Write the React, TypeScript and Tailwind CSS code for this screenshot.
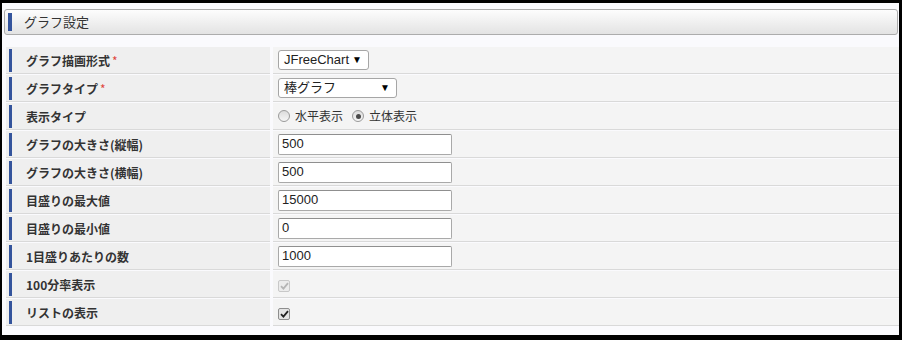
import React from 'react';

const jp = { fontFamily: '"Noto Sans CJK JP", "Noto Sans", sans-serif' };
const latin = { fontFamily: '"Liberation Sans", "Noto Sans CJK JP", sans-serif' };

const Required: React.FC = () => <span className="ml-[2px] text-[#e0463c] font-normal">*</span>;

const Row: React.FC<{ label: React.ReactNode; children: React.ReactNode }> = ({ label, children }) => (
  <div className="flex h-[27px] mb-px">
    <div className="w-[264px] shrink-0 bg-[#efefef] border-b border-[#d9d9d9] pl-[3px] pt-[2px] pb-px flex">
      <div
        className="border-l-[3px] border-[#34549c] pl-[14px] flex items-center text-[12px] font-bold text-[#333]"
        style={jp}
      >
        {label}
      </div>
    </div>
    <div className="ml-[3px] flex-1 bg-[#f4f4f4] border-b border-[#d9d9d9] pl-[5px] flex items-center">
      {children}
    </div>
  </div>
);

const Select: React.FC<{ value: string; width: string }> = ({ value, width }) => (
  <div
    className={`${width} h-[20px] bg-white border border-[#a6a6a6] rounded-[3px] flex items-center justify-between pl-[5px] pr-[6px] text-[13px] text-[#222]`}
    style={latin}
  >
    <span>{value}</span>
    <span className="text-[10px] leading-none text-black">▼</span>
  </div>
);

const TextInput: React.FC<{ value: string }> = ({ value }) => (
  <div
    className="w-[174px] h-[21px] bg-white border border-[#a9a9a9] border-t-[#8f8f8f] rounded-[2px] flex items-center pl-[3px] text-[13px] text-[#222]"
    style={latin}
  >
    {value}
  </div>
);

const Radio: React.FC<{ checked?: boolean; label: string }> = ({ checked, label }) => (
  <div className="flex items-center mr-[9px]">
    <span className="w-[12px] h-[12px] rounded-full border border-[#9a9a9a] bg-gradient-to-b from-[#dcdcdc] to-[#f6f6f6] flex items-center justify-center">
      {checked && <span className="w-[5px] h-[5px] rounded-full bg-[#4a4a4a]" />}
    </span>
    <span className="ml-[5px] text-[12px] text-[#333]" style={jp}>
      {label}
    </span>
  </div>
);

const Checkbox: React.FC<{ disabled?: boolean }> = ({ disabled }) => (
  <span
    className={`mt-[3px] w-[12px] h-[12px] rounded-[2px] border flex items-center justify-center ${
      disabled ? 'border-[#c8c8c8] bg-[#ececec]' : 'border-[#8e8e8e] bg-[#e4e4e4]'
    }`}
  >
    <svg width="9" height="8" viewBox="0 0 9 8">
      <path
        d="M1 4.2 L3.4 6.6 L8 1.2"
        fill="none"
        stroke={disabled ? '#b5b5b5' : '#222'}
        strokeWidth="1.8"
      />
    </svg>
  </span>
);

const App: React.FC = () => {
  return (
    <div className="w-[902px] h-[340px] bg-black pt-[3px] pl-[2px] pr-[3px] pb-[5px]">
      <div className="h-full bg-[#fafafd] pt-[6px]">
        {/* Header */}
        <div className="ml-[2px] mr-px h-[26px] border border-[#acacac] rounded-[3px] bg-gradient-to-b from-[#fdfdfd] to-[#e3e3e3] flex items-center pl-[3px]">
          <div className="w-[4px] h-[18px] bg-[#34549c]" />
          <span className="ml-[12px] text-[13px] text-[#333]" style={jp}>
            グラフ設定
          </span>
        </div>

        {/* Rows */}
        <div className="mt-[12px] ml-[4px]">
          <Row label={<>グラフ描画形式<Required /></>}>
            <Select value="JFreeChart" width="w-[91px]" />
          </Row>
          <Row label={<>グラフタイプ<Required /></>}>
            <Select value="棒グラフ" width="w-[119px]" />
          </Row>
          <Row label="表示タイプ">
            <Radio label="水平表示" />
            <Radio checked label="立体表示" />
          </Row>
          <Row label="グラフの大きさ(縦幅)">
            <TextInput value="500" />
          </Row>
          <Row label="グラフの大きさ(横幅)">
            <TextInput value="500" />
          </Row>
          <Row label="目盛りの最大値">
            <TextInput value="15000" />
          </Row>
          <Row label="目盛りの最小値">
            <TextInput value="0" />
          </Row>
          <Row label="1目盛りあたりの数">
            <TextInput value="1000" />
          </Row>
          <Row label="100分率表示">
            <Checkbox disabled />
          </Row>
          <Row label="リストの表示">
            <Checkbox />
          </Row>
        </div>
      </div>
    </div>
  );
};

export default App;
